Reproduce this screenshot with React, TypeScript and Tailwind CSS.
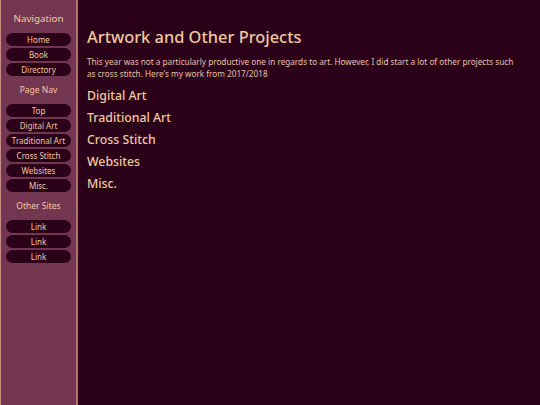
import React from "react";

const font = { fontFamily: '"Noto Sans", "DejaVu Sans", sans-serif' };

function NavButton({ label }: { label: string }) {
    return (
        <div className="h-[13px] rounded-full bg-[#2b0019] text-[8px] leading-[13px] text-center text-[#f2c8a0]">
            {label}
        </div>
    );
}

export default function App() {
    const pageNav = ["Top", "Digital Art", "Traditional Art", "Cross Stitch", "Websites", "Misc."];
    const sections = ["Digital Art", "Traditional Art", "Cross Stitch", "Websites", "Misc."];

    return (
        <main className="flex w-[540px] h-[405px] bg-[#2b0019] text-[#f2c8a0]" style={font}>
            {/* Sidebar */}
            <aside className="w-[78px] h-full bg-[#733651] border-l border-l-[#c98f7f] border-r-2 border-r-[#b0706f] px-[5px] pt-[12px] flex flex-col">
                <h3 className="text-[9.8px] text-center leading-[14px] mb-[7px]">Navigation</h3>
                <section className="flex flex-col gap-[2px]">
                    <NavButton label="Home" />
                    <NavButton label="Book" />
                    <NavButton label="Directory" />
                </section>
                <h4 className="text-[8.5px] text-center leading-[12px] mt-[8px] mb-[8px]">Page Nav</h4>
                <section className="flex flex-col gap-[2px]">
                    {pageNav.map((p) => (
                        <NavButton key={p} label={p} />
                    ))}
                </section>
                <h4 className="text-[8.5px] text-center leading-[12px] mt-[8px] mb-[8px]">Other Sites</h4>
                <section className="flex flex-col gap-[2px]">
                    <NavButton label="Link" />
                    <NavButton label="Link" />
                    <NavButton label="Link" />
                </section>
            </aside>

            {/* Content */}
            <section className="flex-1 pl-[9px] pr-[24px] pt-[26px]">
                <h1 className="text-[16.4px] leading-[22px] font-medium">Artwork and Other Projects</h1>
                <p className="text-[8.2px] leading-[12px] mt-[8px] text-[#e9c2a6]">
                    This year was not a particularly productive one in regards to art. However, I did start a lot of other projects such as cross stitch. Here's my work from 2017/2018
                </p>
                <section className="flex flex-col mt-[5px]">
                    {sections.map((s) => (
                        <h2 key={s} className="text-[12.3px] leading-[22px] font-medium">{s}</h2>
                    ))}
                </section>
            </section>
        </main>
    );
}
